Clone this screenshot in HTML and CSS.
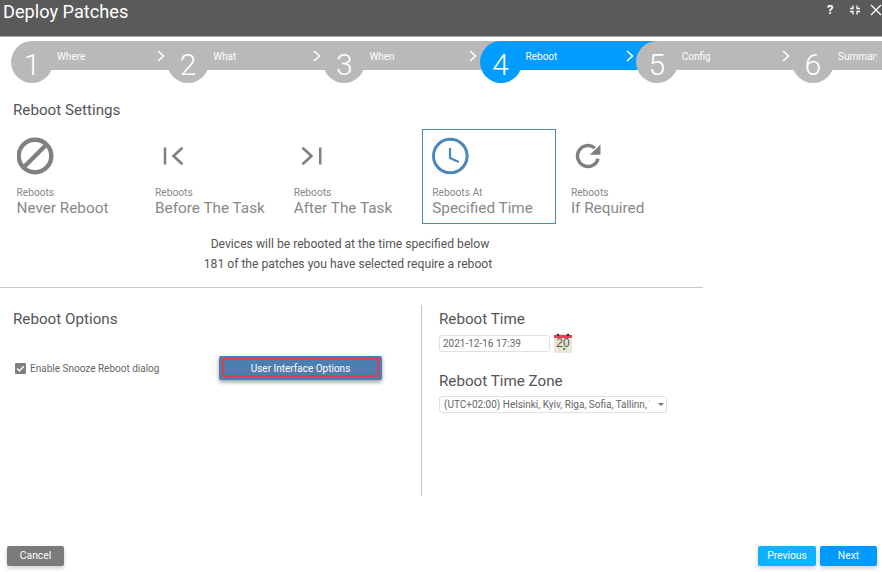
FILE: index.html
```html
<!DOCTYPE html>
<html lang="en">
<head>
<meta charset="utf-8">
<title>Deploy Patches</title>
<link rel="stylesheet" href="styles.css">
</head>
<body>
<div class="page">
  <header class="titlebar">
    <h1 class="title">Deploy Patches</h1>
    <div class="window-actions">
      <span class="help">?</span>
      <svg class="action-icon" width="12" height="12" viewBox="0 0 12 12"><path d="M4 1.500v3H1M8 1.500v3h3M4 10.500v-3H1M8 10.500v-3h3" fill="none" stroke="#fff" stroke-width="1.300"/></svg>
      <svg class="action-icon" width="12" height="12" viewBox="0 0 12 12"><path d="M1 1l10 10M11 1L1 11" fill="none" stroke="#fff" stroke-width="1.300"/></svg>
    </div>
  </header>

  <nav class="stepper">
    <div class="step"><span class="step-num">1</span><span class="step-label">Where</span><svg class="chev" width="8" height="12" viewBox="0 0 8 12"><path d="M1 1l5.500 5L1 11" fill="none" stroke="#fff" stroke-width="1.600"/></svg></div>
    <div class="step"><span class="step-num">2</span><span class="step-label">What</span><svg class="chev" width="8" height="12" viewBox="0 0 8 12"><path d="M1 1l5.500 5L1 11" fill="none" stroke="#fff" stroke-width="1.600"/></svg></div>
    <div class="step"><span class="step-num">3</span><span class="step-label">When</span><svg class="chev" width="8" height="12" viewBox="0 0 8 12"><path d="M1 1l5.500 5L1 11" fill="none" stroke="#fff" stroke-width="1.600"/></svg></div>
    <div class="step step-active"><span class="step-num">4</span><span class="step-label">Reboot</span><svg class="chev" width="8" height="12" viewBox="0 0 8 12"><path d="M1 1l5.500 5L1 11" fill="none" stroke="#fff" stroke-width="1.600"/></svg></div>
    <div class="step"><span class="step-num">5</span><span class="step-label">Config</span><svg class="chev" width="8" height="12" viewBox="0 0 8 12"><path d="M1 1l5.500 5L1 11" fill="none" stroke="#fff" stroke-width="1.600"/></svg></div>
    <div class="step step-last"><span class="step-num">6</span><span class="step-label">Summary</span></div>
  </nav>

  <section class="settings">
    <h2 class="section-title">Reboot Settings</h2>
    <div class="choices">
      <div class="choice">
        <svg class="choice-icon" width="42" height="42" viewBox="0 0 42 42"><circle cx="18" cy="21" r="16.300" fill="none" stroke="#808080" stroke-width="4.400"/><path d="M6.500 32.500L29.500 9.500" stroke="#808080" stroke-width="4.400"/></svg>
        <span class="choice-small">Reboots</span><span class="choice-big">Never Reboot</span>
      </div>
      <div class="choice">
        <svg class="choice-icon" width="42" height="42" viewBox="0 0 42 42"><path d="M10 12.500v17" stroke="#808080" stroke-width="2.500" fill="none"/><path d="M27.500 12.800L18.500 21l9 8.200" stroke="#808080" stroke-width="2.600" fill="none"/></svg>
        <span class="choice-small">Reboots</span><span class="choice-big">Before The Task</span>
      </div>
      <div class="choice">
        <svg class="choice-icon" width="42" height="42" viewBox="0 0 42 42"><path d="M8.500 12.800l9 8.200-9 8.200" stroke="#808080" stroke-width="2.600" fill="none"/><path d="M26.200 12.500v17" stroke="#808080" stroke-width="2.500" fill="none"/></svg>
        <span class="choice-small">Reboots</span><span class="choice-big">After The Task</span>
      </div>
      <div class="choice choice-selected">
        <svg class="choice-icon" width="42" height="42" viewBox="0 0 42 42"><circle cx="18.300" cy="21" r="16.800" fill="none" stroke="#4b87b9" stroke-width="3"/><path d="M18 13v10l8.800 4" fill="none" stroke="#4b87b9" stroke-width="2.200"/></svg>
        <span class="choice-small">Reboots At</span><span class="choice-big">Specified Time</span>
      </div>
      <div class="choice">
        <svg class="choice-icon" width="42" height="42" viewBox="0 0 42 42"><path d="M23.800 13A10.500 10.500 0 1 0 27.100 23.700" fill="none" stroke="#808080" stroke-width="3.400"/><path d="M29.500 9.500v10.300H18.700z" fill="#808080"/></svg>
        <span class="choice-small">Reboots</span><span class="choice-big">If Required</span>
      </div>
    </div>
    <p class="note">Devices will be rebooted at the time specified below</p>
    <p class="note note-second">181 of the patches you have selected require a reboot</p>
  </section>

  <hr class="rule">

  <section class="options">
    <div class="options-left">
      <h2 class="section-title">Reboot Options</h2>
      <div class="snooze-row">
        <label class="check-label">
          <svg class="checkbox" width="11" height="11" viewBox="0 0 11 11"><rect width="11" height="11" rx="1" fill="#808080"/><path d="M2.200 5.500l2.300 2.300 4.300-4.500" fill="none" stroke="#fff" stroke-width="1.400"/></svg>
          Enable Snooze Reboot dialog
        </label>
        <button class="ui-options"><span class="ui-options-inner">User Interface Options</span></button>
      </div>
    </div>
    <div class="options-right">
      <h2 class="section-title">Reboot Time</h2>
      <div class="time-row">
        <div class="field time-field">2021-12-16 17:39</div>
        <svg class="calendar" width="18" height="20" viewBox="0 0 18 20"><rect y="1" width="18" height="19" fill="#ece8d6"/><path d="M1 10h16M1 14h16M6 7v12M12 7v12" stroke="#dcd8c0" stroke-width="1"/><rect y="2" width="18" height="3" fill="#ee4055"/><circle cx="4" cy="2" r="1.300" fill="#333"/><circle cx="14" cy="2" r="1.300" fill="#333"/><text x="9" y="14" class="calendar-text">20</text><circle cx="10" cy="16" r="1.200" fill="#2aa58a"/></svg>
      </div>
      <h2 class="section-title zone-title">Reboot Time Zone</h2>
      <div class="field zone-field"><span class="zone-text">(UTC+02:00) Helsinki, Kyiv, Riga, Sofia, Tallinn, Vilnius</span><span class="caret"></span></div>
    </div>
  </section>

  <footer class="footer">
    <button class="btn btn-cancel">Cancel</button>
    <div class="footer-right">
      <button class="btn btn-prev">Previous</button>
      <button class="btn btn-next">Next</button>
    </div>
  </footer>
</div>
</body>
</html>
```
FILE: styles.css
```css
* { box-sizing: border-box; }
html, body { margin: 0; padding: 0; height: 100%; overflow: hidden; background: #fff; }
body { font-family: Roboto, "Liberation Sans", sans-serif; color: #555; }
.page { width: 882px; height: 572px; display: flex; flex-direction: column; }

.titlebar {
  height: 37px; background: #5a5a5a; border-bottom: 1px solid #a9a9a9;
  display: flex; justify-content: space-between; padding: 0 0 0 3px; flex: none;
}
.title { margin: 1px 0 0; font-size: 18.200px; line-height: 21px; font-weight: 400; color: #fff; }
.window-actions { display: flex; align-items: flex-start; padding-top: 3px; }
.help { font-size: 13px; line-height: 13px; font-weight: 700; color: #fff; width: 10px; margin-right: 12px; }
.action-icon { margin-right: 4px; margin-top: 1px; }
.action-icon + .action-icon { margin-left: 5px; margin-right: 0; }

.stepper { display: flex; margin: 4px 0 0 11px; height: 42px; overflow: hidden; flex: none; }
.step { flex: 0 0 156.200px; position: relative; height: 42px; }
.step::before {
  content: ""; position: absolute; left: 20px; right: -20px; top: 0; height: 29px; background: #b9b9b9;
}
.step-active::before { background: #009cff; }
.step-num {
  position: absolute; left: 0; top: 0; width: 42px; height: 42px; border-radius: 50%;
  background: #b9b9b9; color: #fff; font-size: 30px; line-height: 47px; text-align: center; font-weight: 300;
}
.step-active .step-num { background: #009cff; }
.step-label { position: absolute; left: 46px; top: 10px; font-size: 10px; line-height: 12px; color: #fff; white-space: nowrap; overflow: hidden; }
.chev { position: absolute; left: 146px; top: 9px; }
.step + .step { z-index: 1; }
.step-last { flex: 1 1 auto; }
.step-last::before { right: 0; }
.step-last .step-label { width: 39px; }

.settings { flex: none; }
.section-title { margin: 0; font-size: 15.200px; line-height: 18px; font-weight: 400; color: #555; }
.settings > .section-title { margin: 18px 0 0 13px; }
.choices { display: flex; gap: 4.600px; margin: 10px 0 0 6px; }
.choice {
  width: 134px; height: 95px; padding: 4.500px 8px 0 9.500px; border: 1.500px solid transparent;
  display: flex; flex-direction: column; overflow: hidden;
}
.choice-selected { border-color: #4b87b9; }
.choice-icon { display: block; flex: none; }
.choice-small { margin-top: 10.500px; font-size: 10.200px; line-height: 12px; color: #888; white-space: nowrap; }
.choice-big { margin-top: 0; font-size: 15.300px; line-height: 19px; color: #888; white-space: nowrap; }
.note { margin: 0; width: 700px; text-align: center; font-size: 12.150px; line-height: 20px; color: #555; }
.note-second { width: 696px; }
.settings .note:first-of-type { margin-top: 10px; }

.rule { margin: 13px 0 0; width: 703px; height: 1px; border: 0; background: #c8c8c8; flex: none; }

.options { display: flex; margin-top: 17px; height: 191px; flex: none; }
.options-left { width: 422px; border-right: 1px solid #c4c4c4; padding: 5px 0 0 13px; }
.options-right { padding: 5px 0 0 17px; flex: 1; }
.snooze-row { display: flex; align-items: center; margin-top: 28px; }
.check-label { display: flex; align-items: center; gap: 4px; width: 206px; padding-left: 2px; font-size: 10px; color: #666; white-space: nowrap; }
.checkbox { flex: none; }
.ui-options {
  width: 163px; height: 24px; padding: 2px 3px 3px; border: 0; border-radius: 2px; background: #4a7fb0;
  box-shadow: 0 2px 4px rgba(0,0,0,.4); font: inherit; display: block;
}
.ui-options-inner {
  display: block; height: 19px; border: 2px solid #e13c4a; color: #fff; font-size: 10px; line-height: 17px; text-align: center;
}

.time-row { display: flex; align-items: center; gap: 5px; margin-top: 5px; height: 20px; }
.field { height: 17px; border: 1px solid #e0e0e0; border-radius: 3px; font-size: 10px; line-height: 15px; color: #666; background: #fff; }
.time-field { width: 111px; padding-left: 3px; }
.calendar { flex: none; margin-left: -1px; }
.calendar-text { font-family: "Liberation Sans", sans-serif; font-size: 12px; fill: #555; text-anchor: middle; }
.zone-title { margin-top: 19px; }
.zone-field { width: 228px; margin-top: 6px; padding-left: 4px; display: flex; align-items: center; }
.zone-text { width: 206px; overflow: hidden; white-space: nowrap; }
.caret { margin-left: 8px; border-left: 3px solid transparent; border-right: 3px solid transparent; border-top: 3px solid #777; }

.footer { display: flex; justify-content: space-between; margin-top: auto; padding: 0 5px 6px 7px; flex: none; }
.footer-right { display: flex; gap: 4px; }
.btn {
  height: 20px; width: 57px; padding: 0; border: 0; border-radius: 2px; color: #fff;
  font-family: inherit; font-size: 10.300px; line-height: 20px; box-shadow: 0 2px 4px rgba(0,0,0,.2);
}
.btn-cancel { background: #7b7b7b; }
.btn-prev { background: #0db2ff; width: 58px; }
.btn-next { background: #0099ff; }
```
